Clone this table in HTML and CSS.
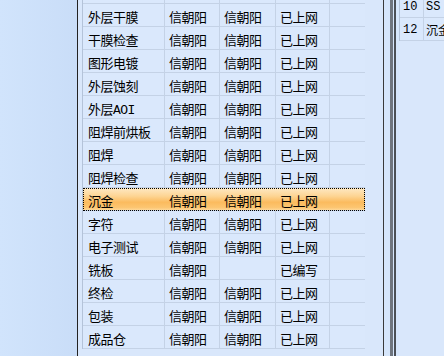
FILE: index.html
```html
<!DOCTYPE html>
<html lang="zh-CN">
<head>
<meta charset="utf-8">
<title>工序</title>
<link rel="stylesheet" href="styles.css">
</head>
<body>
<div class="app">
  <aside class="nav-pane"></aside>
  <section class="grid-pane">
    <div class="grid">
      <div class="row row-partial"><div class="cell c1"></div><div class="cell c2"></div><div class="cell c3"></div><div class="cell c4"></div><div class="cell c5"></div></div>
      <div class="row"><div class="cell c1">外层干膜</div><div class="cell c2">信朝阳</div><div class="cell c3">信朝阳</div><div class="cell c4">已上网</div><div class="cell c5"></div></div>
      <div class="row"><div class="cell c1">干膜检查</div><div class="cell c2">信朝阳</div><div class="cell c3">信朝阳</div><div class="cell c4">已上网</div><div class="cell c5"></div></div>
      <div class="row"><div class="cell c1">图形电镀</div><div class="cell c2">信朝阳</div><div class="cell c3">信朝阳</div><div class="cell c4">已上网</div><div class="cell c5"></div></div>
      <div class="row"><div class="cell c1">外层蚀刻</div><div class="cell c2">信朝阳</div><div class="cell c3">信朝阳</div><div class="cell c4">已上网</div><div class="cell c5"></div></div>
      <div class="row"><div class="cell c1">外层AOI</div><div class="cell c2">信朝阳</div><div class="cell c3">信朝阳</div><div class="cell c4">已上网</div><div class="cell c5"></div></div>
      <div class="row"><div class="cell c1">阻焊前烘板</div><div class="cell c2">信朝阳</div><div class="cell c3">信朝阳</div><div class="cell c4">已上网</div><div class="cell c5"></div></div>
      <div class="row"><div class="cell c1">阻焊</div><div class="cell c2">信朝阳</div><div class="cell c3">信朝阳</div><div class="cell c4">已上网</div><div class="cell c5"></div></div>
      <div class="row"><div class="cell c1">阻焊检查</div><div class="cell c2">信朝阳</div><div class="cell c3">信朝阳</div><div class="cell c4">已上网</div><div class="cell c5"></div></div>
      <div class="row selected"><div class="cell c1">沉金</div><div class="cell c2">信朝阳</div><div class="cell c3">信朝阳</div><div class="cell c4">已上网</div><div class="cell c5"></div></div>
      <div class="row"><div class="cell c1">字符</div><div class="cell c2">信朝阳</div><div class="cell c3">信朝阳</div><div class="cell c4">已上网</div><div class="cell c5"></div></div>
      <div class="row"><div class="cell c1">电子测试</div><div class="cell c2">信朝阳</div><div class="cell c3">信朝阳</div><div class="cell c4">已上网</div><div class="cell c5"></div></div>
      <div class="row"><div class="cell c1">铣板</div><div class="cell c2">信朝阳</div><div class="cell c3"></div><div class="cell c4">已编写</div><div class="cell c5"></div></div>
      <div class="row"><div class="cell c1">终检</div><div class="cell c2">信朝阳</div><div class="cell c3">信朝阳</div><div class="cell c4">已上网</div><div class="cell c5"></div></div>
      <div class="row"><div class="cell c1">包装</div><div class="cell c2">信朝阳</div><div class="cell c3">信朝阳</div><div class="cell c4">已上网</div><div class="cell c5"></div></div>
      <div class="row"><div class="cell c1">成品仓</div><div class="cell c2">信朝阳</div><div class="cell c3">信朝阳</div><div class="cell c4">已上网</div><div class="cell c5"></div></div>
    </div>
  </section>
  <div class="splitter">
    <span class="sp-edge"></span><span class="sp-gap6"></span><span class="sp-bar"></span><span class="sp-gap1"></span><span class="sp-line"></span><span class="sp-gap3"></span>
  </div>
  <section class="detail-pane">
    <div class="dgrid">
      <div class="drow"><div class="dcell num">10</div><div class="dcell txt">SS</div></div>
      <div class="drow"><div class="dcell num">12</div><div class="dcell txt">沉金</div></div>
    </div>
  </section>
</div>
</body>
</html>
```

FILE: styles.css
```css
* { box-sizing: border-box; margin: 0; padding: 0; }
html, body { width: 444px; height: 356px; overflow: hidden; }
body {
  font-family: "Liberation Mono", "Noto Sans CJK SC", monospace;
  font-size: 13px;
  color: #000;
  background: #d9e7fb;
}
.app { display: flex; height: 356px; }

.nav-pane {
  width: 77px;
  flex: none;
  background: linear-gradient(to right, #d1e4fc, #c9ddf8);
}

.grid-pane {
  width: 306px;
  flex: none;
  border-left: 1px solid #222;
  padding-left: 4px;
  background: #d9e7fb;
}
.grid {
  width: 283px;
  border-left: 1px solid #b4c3d9;
}
.row { display: flex; height: 23px; }
.row-partial { height: 4px; }
.cell {
  height: 100%;
  border-right: 1px solid #c4d2e6;
  border-bottom: 1px solid #c4d2e6;
  padding: 2px 0 0 4px;
  display: flex;
  align-items: center;
  white-space: nowrap;
  overflow: hidden;
  letter-spacing: -0.5px;
  background: #dae8fc;
}
.c1 { width: 82px; padding-left: 5px; }
.c2 { width: 55px; }
.c3 { width: 56px; }
.c4 { width: 54px; }
.c5 { width: 35px; border-right: none; }

.row.selected {
  background: linear-gradient(to bottom, #fee9c4 0%, #fdd594 35%, #fbbb5e 62%, #fcc672 85%, #fedea6 100%);
  outline: 1px dotted #000;
  outline-offset: -1px;
}
.row.selected .cell { background: transparent; border-right-color: transparent; }

.splitter { display: flex; width: 16px; flex: none; }
.splitter span { display: block; height: 100%; }
.sp-edge { width: 1px; background: #3a3a3a; }
.sp-gap6 { width: 6px; background: #d6e6fb; }
.sp-bar { width: 3px; background: #6f757e; }
.sp-gap1 { width: 1px; background: #d6e6fb; }
.sp-line { width: 2px; background: #4b4f55; }
.sp-gap3 { width: 3px; background: #d6e6fb; }

.detail-pane { flex: 1; overflow: hidden; background: #d9e7fb; }
.dgrid { margin-top: -5px; border-left: 1px solid #b4c3d9; width: 120px; }
.drow { display: flex; height: 23px; }
.dcell {
  height: 100%;
  border-bottom: 1px solid #c4d2e6;
  display: flex;
  align-items: center;
  padding-top: 2px;
  white-space: nowrap;
  overflow: hidden;
  font-size: 12px;
  background: #dae8fc;
}
.num { width: 24px; border-right: 1px solid #c4d2e6; padding-left: 3px; }
.txt { flex: 1; padding-left: 2px; }
```
